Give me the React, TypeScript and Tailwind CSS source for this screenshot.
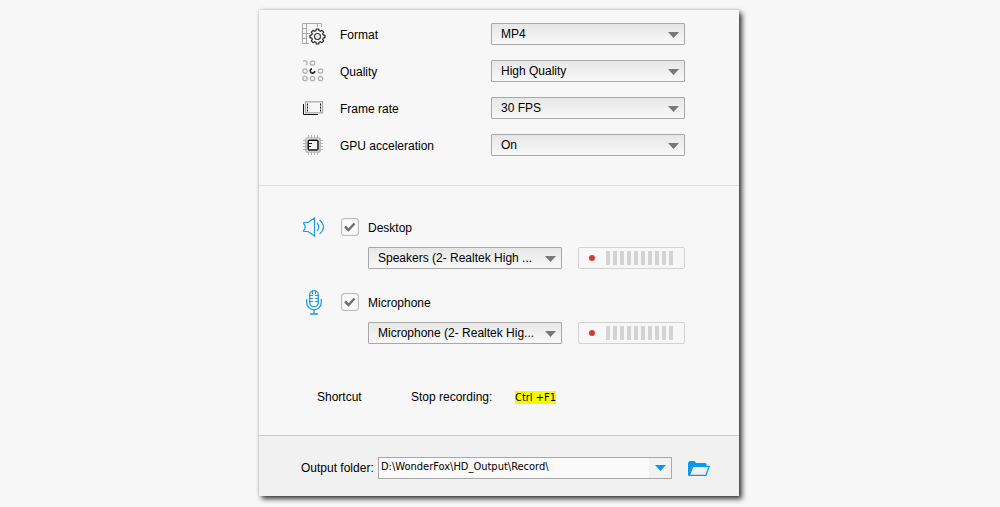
import { useId, useState, type ReactNode } from "react";

function FormatIcon() {
  return (
    <svg width="24" height="22" viewBox="0 0 24 22" fill="none" aria-hidden="true">
      <path d="M19.500 4V.5H.5V20.500H7M4.500 .5V20.500M.5 5.500H4.500M.5 10.500H8M.5 15.500H4.500M15.500 .5V4" stroke="#a8a8a8" />
      <path d="M21.28 11.930 L23 12.300 L23 14.700 L21.280 15.070 L20.700 16.480 L21.650 17.950 L19.950 19.650 L18.480 18.700 L17.070 19.280 L16.700 21 L14.300 21 L13.930 19.280 L12.520 18.700 L11.050 19.650 L9.350 17.950 L10.300 16.480 L9.720 15.070 L8 14.700 L8 12.300 L9.720 11.930 L10.300 10.520 L9.350 9.050 L11.050 7.350 L12.520 8.300 L13.930 7.720 L14.300 6 L16.700 6 L17.070 7.720 L18.480 8.300 L19.950 7.350 L21.650 9.050 L20.700 10.520Z" fill="#f7f7f7" stroke="#222" strokeWidth="1.200" strokeLinejoin="round" />
      <circle cx="15.500" cy="13.500" r="3" stroke="#333" strokeWidth="1.100" />
    </svg>
  );
}

function QualityIcon() {
  return (
    <svg width="22" height="22" viewBox="0 0 22 22" fill="none" stroke="#b2b2b2" strokeWidth="1.300" aria-hidden="true">
      <path d="M1.200 1.500A2.200 2.200 0 1 1 3.500 5" />
      <circle cx="10.500" cy="3" r="2.200" />
      <circle cx="3" cy="11" r="2.200" />
      <circle cx="18.500" cy="11" r="2.200" />
      <circle cx="3" cy="18.500" r="2.200" />
      <circle cx="10.500" cy="18.500" r="2.200" />
      <circle cx="18.500" cy="18.500" r="2.200" />
      <path d="M10 8.800A2.200 2.200 0 1 0 12.700 11" stroke="#222" strokeWidth="1.600" />
    </svg>
  );
}

function FrameRateIcon() {
  return (
    <svg width="22" height="14" viewBox="0 0 22 14" fill="none" aria-hidden="true">
      <rect x="3.500" y=".8" width="17" height="11" stroke="#aaaaaa" strokeWidth="1.300" />
      <path d="M5.500 2.500V10.500M18.500 2.500V10.500" stroke="#111" strokeDasharray="2 1" />
      <path d="M1.500 3V13.500H16" stroke="#111" />
    </svg>
  );
}

function GpuIcon() {
  return (
    <svg width="21" height="20" viewBox="0 0 21 20" fill="none" aria-hidden="true">
      <g transform="translate(1 0)">
        <path d="M5.500 0V20M8.500 0V20M11.500 0V20M14.500 0V20M0 5.500H20M0 8.500H20M0 11.500H20M0 14.500H20" stroke="#b5b5b5" />
        <rect x="3" y="3" width="14" height="14" rx="1" fill="#f7f7f7" stroke="#a5a5a5" strokeWidth="1.200" />
        <rect x="5.200" y="5.200" width="9.800" height="9.800" rx="1" stroke="#111" strokeWidth="1.500" />
        <path d="M6 8.500H9M6 11.500H8" stroke="#111" />
      </g>
    </svg>
  );
}

function SpeakerIcon() {
  return (
    <svg width="22" height="20" viewBox="0 0 22 20" fill="none" stroke="#1b9be0" strokeWidth="1.200" aria-hidden="true">
      <path d="M.8 5.500H5L11.500 1V19L5 14.500H.8V13L2 12V8L.8 7Z" />
      <path d="M14 6Q17.500 10 14 14M16.500 3Q24.500 10 16.500 17" />
    </svg>
  );
}

function MicrophoneIcon() {
  return (
    <svg width="16" height="25" viewBox="0 0 16 25" fill="none" stroke="#1b9be0" strokeWidth="1.300" aria-hidden="true">
      <rect x="3.700" y=".7" width="8.600" height="16" rx="4.300" />
      <path d="M.7 9V12.500A7.300 7.300 0 0 0 15.300 12.500V9M8 20V24M4 24H12" />
      <path d="M4 5.500H7M9 5.500H12M4 8.500H7M9 8.500H12M4 11.500H7M9 11.500H12M6.500 1V4M9.500 1V4" strokeWidth="1" />
    </svg>
  );
}

function FolderIcon() {
  return (
    <svg width="22" height="15" viewBox="0 0 22 15" aria-hidden="true">
      <path d="M0 14V2L1.500 0H6.500L8 2H17.500L18.500 3V5H4.500L1 15Z" fill="#0a97ee" />
      <path d="M5 5.300H21.200L18 14.300H1.300Z" fill="#f1f1f1" stroke="#0a97ee" strokeWidth="1.200" />
    </svg>
  );
}

function DropDown({ id, label, value }: { id?: string; label?: string; value: string }) {
  return (
    <div className="relative w-[194px] shrink-0">
      <select
        id={id}
        aria-label={label}
        className="block h-[22px] w-full appearance-none rounded-[1px] border border-[#a8a8a8] bg-linear-to-b from-[#e7e7e7] to-[#f8f8f8] pr-6 pb-px pl-[9px] text-xs text-black"
      >
        <option>{value}</option>
      </select>
      <svg className="pointer-events-none absolute top-[9px] right-[6px]" width="11" height="6" viewBox="0 0 11 6" aria-hidden="true">
        <path d="M0 0H11L5.500 6Z" fill="#777" />
      </svg>
    </div>
  );
}

function SettingRow({ icon, label, value }: { icon: ReactNode; label: string; value: string }) {
  const id = useId();
  return (
    <div className="flex h-[22px] items-center">
      <span className="flex w-6 items-center">{icon}</span>
      <label htmlFor={id} className="ml-[14px] flex-1 pt-[2px]">
        {label}
      </label>
      <DropDown id={id} value={value} />
    </div>
  );
}

function LevelMeter() {
  return (
    <div className="flex h-[22px] w-[107px] items-center rounded-[2px] border border-[#d2d2d2] pl-[10px]">
      <span className="size-[6px] rounded-full bg-[#d33a3a]" />
      <span className="ml-[11px] flex gap-[3px]">
        {Array.from({ length: 10 }, (_, i) => (
          <span key={i} className="h-[14px] w-[4px] bg-[#d3d3d3]" />
        ))}
      </span>
    </div>
  );
}

function AudioSource({ icon, label, device }: { icon: ReactNode; label: string; device: string }) {
  const id = useId();
  const [on, setOn] = useState(true);
  return (
    <div>
      <div className="flex h-[18px] items-center">
        <span className="flex w-6 justify-center">{icon}</span>
        <span className="relative ml-[15px] size-[18px]">
          <input
            id={id}
            type="checkbox"
            checked={on}
            onChange={() => setOn(!on)}
            className="block size-[18px] appearance-none rounded-[3px] border border-[#bcbcbc] bg-[#fafafa] shadow-[inset_0_0_1px_#aaaaaa]"
          />
          {on && (
            <svg className="pointer-events-none absolute inset-0" width="18" height="18" viewBox="0 0 18 18" fill="none" aria-hidden="true">
              <path d="M4 8.500L7.500 12L13.500 5.500" stroke="#707070" strokeWidth="2.500" />
            </svg>
          )}
        </span>
        <label htmlFor={id} className="ml-[9px] pt-[2px]">
          {label}
        </label>
      </div>
      <div className="mt-[11px] flex justify-between pl-[66px]">
        <DropDown label={`${label} device`} value={device} />
        <LevelMeter />
      </div>
    </div>
  );
}

export default function App() {
  return (
    <div className="min-h-screen bg-[#f7f7f7] py-[10px] pr-[17px] pl-[15px] font-['Liberation_Sans',Arial,sans-serif] text-xs text-black">
      <main className="mx-auto w-full max-w-[480px] bg-[#f7f7f7] shadow-[3px_3px_5px_rgba(0,0,0,0.75),0_0_3px_rgba(0,0,0,0.2)]">
        <section className="flex flex-col gap-[15px] border-b border-[#dedede] pt-[13px] pr-[54px] pb-[29px] pl-[43px]">
          <SettingRow icon={<FormatIcon />} label="Format" value="MP4" />
          <SettingRow icon={<QualityIcon />} label="Quality" value="High Quality" />
          <SettingRow icon={<FrameRateIcon />} label="Frame rate" value="30 FPS" />
          <SettingRow icon={<GpuIcon />} label="GPU acceleration" value="On" />
        </section>

        <section className="border-b border-[#c8c8c8] pt-[32px] pr-[54px] pb-[30px] pl-[43px]">
          <div className="flex flex-col gap-6">
            <AudioSource icon={<SpeakerIcon />} label="Desktop" device="Speakers (2- Realtek High ..." />
            <AudioSource icon={<MicrophoneIcon />} label="Microphone" device="Microphone (2- Realtek Hig..." />
          </div>
          <div className="mt-[45px] flex h-4 items-center pl-[15px]">
            <span className="w-[94px]">Shortcut</span>
            <span className="w-[104px]">Stop recording:</span>
            <kbd className="bg-[#f8f800] font-['DejaVu_Sans_Condensed','DejaVu_Sans',sans-serif] text-[11px] leading-[13px]">Ctrl +F1</kbd>
          </div>
        </section>

        <footer className="flex items-center bg-[#f1f1f1] pt-[21px] pr-[29px] pb-[17px] pl-[42px]">
          <label htmlFor="output-folder" className="w-[77px]">
            Output folder:
          </label>
          <div className="flex h-[22px] flex-1 border border-[#a8a8a8] bg-[#fafafa]">
            <input
              id="output-folder"
              type="text"
              defaultValue="D:\WonderFox\HD_Output\Record\"
              className="min-w-0 flex-1 pb-px pl-[2px] font-['DejaVu_Sans_Condensed','DejaVu_Sans',sans-serif] text-[11px] outline-none"
            />
            <button type="button" aria-label="Choose a recent folder" className="flex w-[22px] items-center justify-center bg-[#f2f2f2]">
              <svg width="11" height="6" viewBox="0 0 11 6" aria-hidden="true">
                <path d="M0 0H11L5.500 6Z" fill="#0a97ee" />
              </svg>
            </button>
          </div>
          <button type="button" aria-label="Open folder" className="ml-4">
            <FolderIcon />
          </button>
        </footer>
      </main>
    </div>
  );
}
